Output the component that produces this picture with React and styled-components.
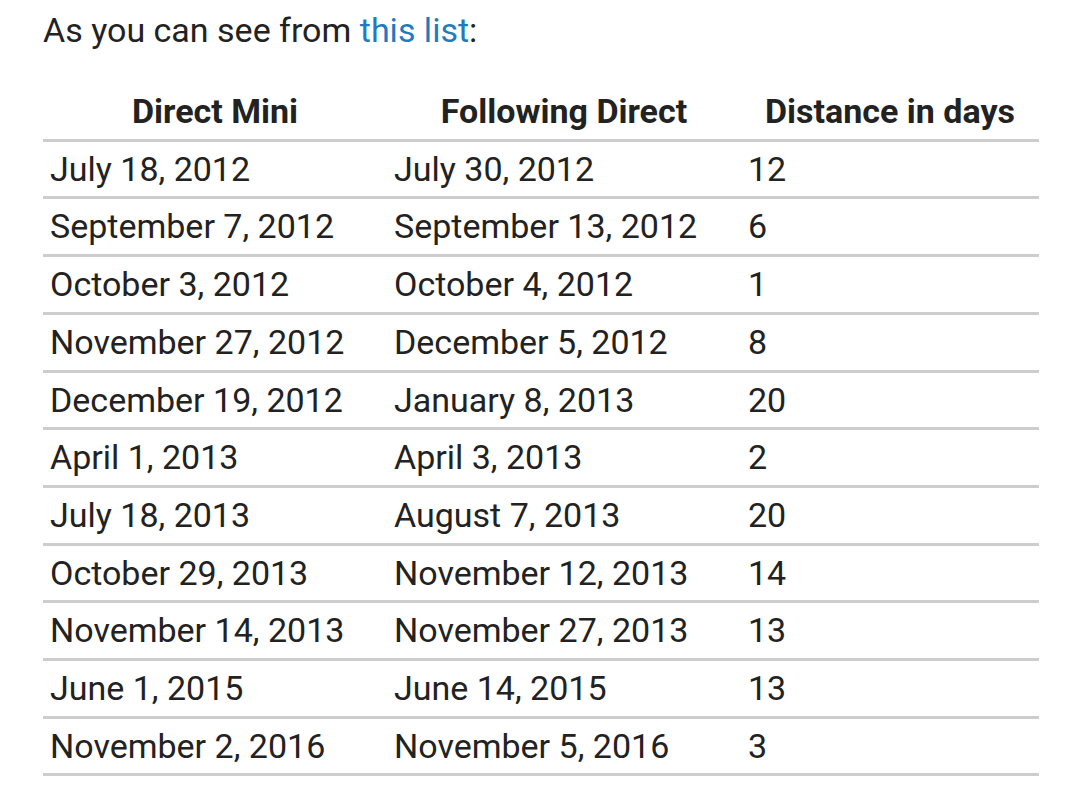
import React from 'react'
import styled, { createGlobalStyle } from 'styled-components'

const GlobalStyle = createGlobalStyle`
  html, body {
    margin: 0;
    padding: 0;
    background: #fff;
  }
  body {
    font-family: Roboto, "Noto Sans", "Liberation Sans", sans-serif;
    color: #222;
  }
`;

const Page = styled.div`
  padding: 10px 0 0 43px;
`;

const Intro = styled.p`
  margin: 0;
  font-size: 34px;
  line-height: 40px;
`;

const TextLink = styled.a`
  color: #1f7bc1;
  text-decoration: none;
`;

const Table = styled.table`
  margin-top: 34px;
  width: 996px;
  border-collapse: collapse;
  table-layout: fixed;
  font-size: 34px;
`;

const Col = styled.col`
  width: ${p => p.$w}px;
`;

const HeadCell = styled.th`
  padding: 10px 8px;
  line-height: 34.7px;
  font-weight: 700;
  text-align: center;
  border-bottom: 3px solid #cdcdcd;
  white-space: nowrap;
`;

const Cell = styled.td`
  padding: 10px 7px;
  line-height: 34.7px;
  text-align: left;
  border-bottom: 3px solid #cdcdcd;
  white-space: nowrap;
`;

const rows = [
  ['July 18, 2012', 'July 30, 2012', '12'],
  ['September 7, 2012', 'September 13, 2012', '6'],
  ['October 3, 2012', 'October 4, 2012', '1'],
  ['November 27, 2012', 'December 5, 2012', '8'],
  ['December 19, 2012', 'January 8, 2013', '20'],
  ['April 1, 2013', 'April 3, 2013', '2'],
  ['July 18, 2013', 'August 7, 2013', '20'],
  ['October 29, 2013', 'November 12, 2013', '14'],
  ['November 14, 2013', 'November 27, 2013', '13'],
  ['June 1, 2015', 'June 14, 2015', '13'],
  ['November 2, 2016', 'November 5, 2016', '3'],
];

export default function App() {
  return (
    <Page>
      <GlobalStyle />
      <Intro>
        As you can see from <TextLink href="#">this list</TextLink>:
      </Intro>
      <Table>
        <colgroup>
          <Col $w={344} />
          <Col $w={354} />
          <Col $w={298} />
        </colgroup>
        <thead>
          <tr>
            <HeadCell>Direct Mini</HeadCell>
            <HeadCell>Following Direct</HeadCell>
            <HeadCell>Distance in days</HeadCell>
          </tr>
        </thead>
        <tbody>
          {rows.map((r, i) => (
            <tr key={i}>
              {r.map((c, j) => <Cell key={j}>{c}</Cell>)}
            </tr>
          ))}
        </tbody>
      </Table>
    </Page>
  );
}
